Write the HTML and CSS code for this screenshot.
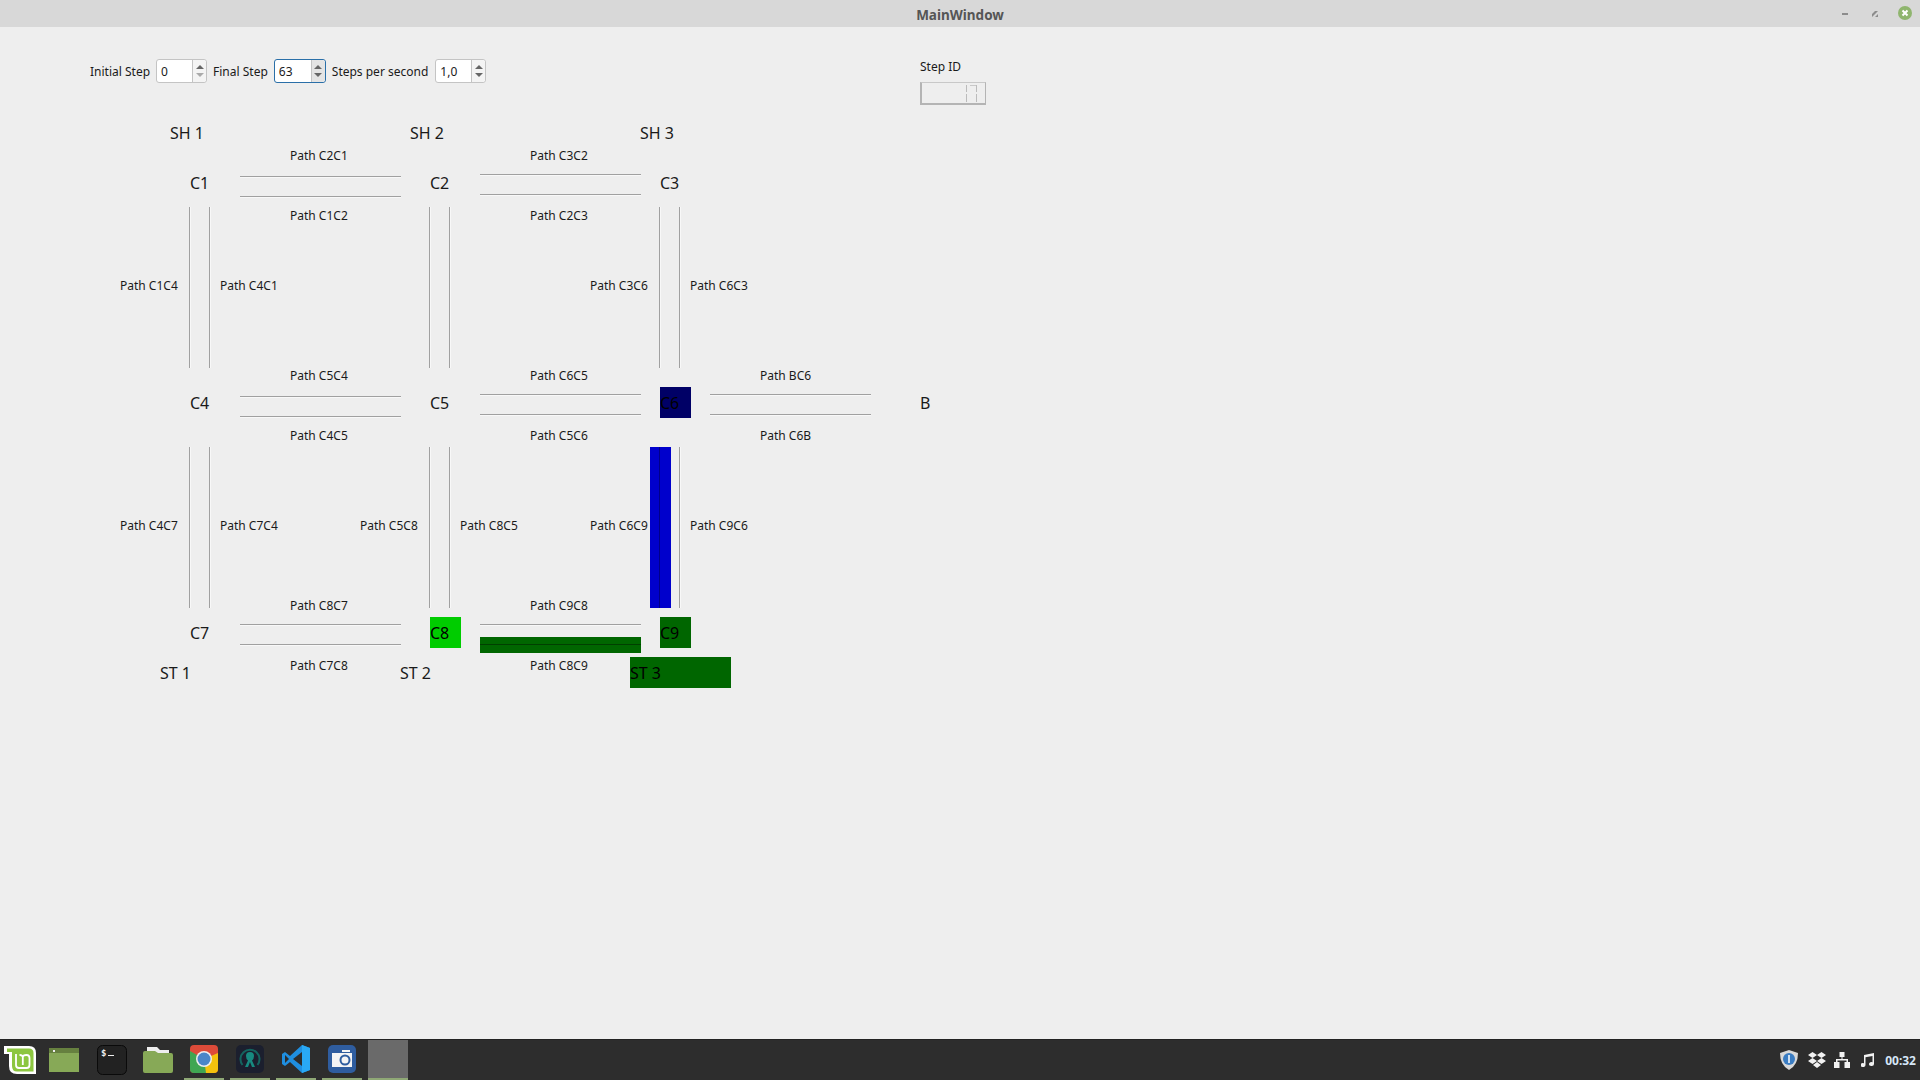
FILE: index.html
```html
<!DOCTYPE html>
<html lang="en">
<head>
  <meta charset="UTF-8">
  <title>MainWindow</title>
  <link rel="stylesheet" href="styles.css">
</head>
<body>
  <div class="screen">
    <header class="titlebar">
      <span class="titlebar-text">MainWindow</span>
      <div class="wm-buttons">
        <svg class="wm-btn" width="14" height="14" viewBox="0 0 14 14"><rect x="5" y="7" width="6" height="2" fill="#8c8c8c"/></svg>
        <svg class="wm-btn" width="14" height="14" viewBox="0 0 14 14"><path d="M1 4 L4 1 H7 L1 7Z M7 7 V4 L4 7Z" fill="#8c8c8c" transform="translate(4 4)"/></svg>
        <svg class="wm-btn" width="16" height="16" viewBox="0 0 16 16"><circle cx="8" cy="8" r="7" fill="#8fb56e"/><path d="M5.500 5.500 L10.500 10.500 M10.500 5.500 L5.500 10.500" stroke="#fff" stroke-width="2"/></svg>
      </div>
    </header>

    <main class="window">
      <div class="controls">
        <label>Initial Step</label>
        <div class="spin">
          <span class="spin-value">0</span>
          <span class="spin-arrows"><i class="up"></i><i class="down off"></i></span>
        </div>
        <label>Final Step</label>
        <div class="spin focused">
          <span class="spin-value">63</span>
          <span class="spin-arrows"><i class="up"></i><i class="down"></i></span>
        </div>
        <label class="label-sps">Steps per second</label>
        <div class="spin">
          <span class="spin-value">1,0</span>
          <span class="spin-arrows"><i class="up"></i><i class="down"></i></span>
        </div>
      </div>

      <div class="step-id">
        <label>Step ID</label>
        <div class="step-box"><span class="step-inner"></span></div>
      </div>

      <!-- diagram -->
      <span class="big n-sh1">SH 1</span>
      <span class="big n-sh2">SH 2</span>
      <span class="big n-sh3">SH 3</span>
      <span class="big n-c1">C1</span>
      <span class="big n-c2">C2</span>
      <span class="big n-c3">C3</span>
      <span class="big n-c4">C4</span>
      <span class="big n-c5">C5</span>
      <span class="big n-c6 cell navy">C6</span>
      <span class="big n-b">B</span>
      <span class="big n-c7">C7</span>
      <span class="big n-c8 cell lime">C8</span>
      <span class="big n-c9 cell green">C9</span>
      <span class="big n-st1">ST 1</span>
      <span class="big n-st2">ST 2</span>
      <span class="big n-st3 green">ST 3</span>

      <span class="path p1 r1">Path C2C1</span>
      <span class="path p1 r2">Path C1C2</span>
      <span class="path p2 r1">Path C3C2</span>
      <span class="path p2 r2">Path C2C3</span>
      <span class="path v1 r3">Path C1C4</span>
      <span class="path v2 r3">Path C4C1</span>
      <span class="path v5 r3">Path C3C6</span>
      <span class="path v6 r3">Path C6C3</span>
      <span class="path p1 r4">Path C5C4</span>
      <span class="path p1 r5">Path C4C5</span>
      <span class="path p2 r4">Path C6C5</span>
      <span class="path p2 r5">Path C5C6</span>
      <span class="path p3 r4">Path BC6</span>
      <span class="path p3 r5">Path C6B</span>
      <span class="path v1 r6">Path C4C7</span>
      <span class="path v2 r6">Path C7C4</span>
      <span class="path v3 r6">Path C5C8</span>
      <span class="path v4 r6">Path C8C5</span>
      <span class="path v5 r6">Path C6C9</span>
      <span class="path v6 r6">Path C9C6</span>
      <span class="path p1 r7">Path C8C7</span>
      <span class="path p1 r8">Path C7C8</span>
      <span class="path p2 r7">Path C9C8</span>
      <span class="path p2 r8">Path C8C9</span>

      <div class="hl h-c2c1"></div>
      <div class="hl h-c1c2"></div>
      <div class="hl h-c3c2"></div>
      <div class="hl h-c2c3"></div>
      <div class="hl h-c5c4"></div>
      <div class="hl h-c4c5"></div>
      <div class="hl h-c6c5"></div>
      <div class="hl h-c5c6"></div>
      <div class="hl h-bc6"></div>
      <div class="hl h-c6b"></div>
      <div class="hl h-c8c7"></div>
      <div class="hl h-c7c8"></div>
      <div class="hl h-c9c8"></div>

      <div class="vl t1 x1"></div>
      <div class="vl t1 x2"></div>
      <div class="vl t1 x3"></div>
      <div class="vl t1 x4"></div>
      <div class="vl t1 x5"></div>
      <div class="vl t1 x6"></div>
      <div class="vl t2 x1"></div>
      <div class="vl t2 x2"></div>
      <div class="vl t2 x3"></div>
      <div class="vl t2 x4"></div>
      <div class="vl t2 x6"></div>

      <div class="bar-blue"></div>
      <div class="bar-green"></div>
    </main>

    <footer class="taskbar">
      <div class="launchers">
        <div class="slot">
          <svg width="32" height="30" viewBox="0 0 32 30"><path d="M0 1 H25 Q32 1 32 8 V29 H13 Q5 29 5 21 V9 H0Z" fill="#fff"/><path d="M3 3.500 H25 Q29.500 3.500 29.500 8 V26.500 H13 Q8 26.500 8 21 V7 H3Z" fill="#8cc63f"/><path d="M12 9 V20 Q12 23 15 23 H22.500 Q25.500 23 25.500 20 V13 Q25.500 10 22.500 10 Q19 10 18.800 12 Q18.500 10 15.500 10 M18.800 12 V20" fill="none" stroke="#fff" stroke-width="1.800"/></svg>
        </div>
        <div class="slot launcher-shift">
          <svg width="30" height="24" viewBox="0 0 30 24"><rect width="30" height="24" fill="#87a957"/><rect width="30" height="5" fill="#66803f"/><rect x="4" y="2" width="2" height="2" fill="#eee"/></svg>
        </div>
        <div class="slot">
          <svg width="30" height="30" viewBox="0 0 30 30"><rect x=".5" y=".5" width="29" height="29" rx="5" fill="#222" stroke="#0a0a0a"/><text x="4" y="11" class="term-text">$</text><rect x="11" y="10" width="6" height="1" fill="#eee"/></svg>
        </div>
        <div class="slot">
          <svg width="30" height="26" viewBox="0 0 30 26"><path d="M4 0 H14 L17 3 H26 V6 H4Z" fill="#eee"/><path d="M2 4 H12 L15 6 H28 Q30 6 30 8 V24 Q30 26 28 26 H2 Q0 26 0 24 V6 Q0 4 2 4Z" fill="#87a957"/></svg>
        </div>
        <div class="slot">
          <svg width="28" height="28" viewBox="0 0 28 28">
            <rect width="28" height="28" rx="4" fill="#dd4b39"/>
            <path d="M14 14 L28 8 V24 Q28 28 24 28 H14Z" fill="#f4c20d"/>
            <path d="M0 6 V24 Q0 28 4 28 H16 L14 14Z" fill="#3fa652"/>
            <circle cx="14" cy="14" r="8" fill="#eee"/><circle cx="14" cy="14" r="6.500" fill="#4a86c8"/>
          </svg>
        </div>
        <div class="slot">
          <svg width="28" height="28" viewBox="0 0 28 28">
            <rect width="28" height="28" rx="5" fill="#1b1f2e"/>
            <path d="M6.500 20 A9.500 9.500 0 1 1 21.500 20" fill="none" stroke="#14645f" stroke-width="2"/>
            <path d="M14 7 Q18 7 18 11 Q18 14 16 15.500 L19 22 H16 L14 17 L12 22 H9 L12 15.500 Q10 14 10 11 Q10 7 14 7Z" fill="#178a80"/>
          </svg>
        </div>
        <div class="slot">
          <svg width="28" height="28" viewBox="0 0 28 28">
            <path d="M20 0 L28 3 V25 L20 28 L8 17 L3 21 L0 19 V9 L3 7 L8 11Z" fill="#1f8fe0"/>
            <path d="M20 0 V28 L28 25 V3Z" fill="#29a9f5"/>
            <path d="M20 7 L11 14 L20 21Z" fill="#2d2d2d"/>
            <path d="M3 10 L7 14 L3 18Z" fill="#2d2d2d"/>
          </svg>
        </div>
        <div class="slot">
          <svg width="28" height="28" viewBox="0 0 28 28">
            <rect width="28" height="28" rx="5" fill="#2f5d9f"/>
            <rect x="4" y="8" width="20" height="14" fill="#f4f4f4"/>
            <rect x="14" y="5" width="8" height="2" fill="#f4f4f4"/>
            <circle cx="17" cy="15" r="4.500" fill="#f4f4f4" stroke="#2f5d9f" stroke-width="2"/>
          </svg>
        </div>
        <div class="slot active"></div>
      </div>
      <div class="tray">
        <svg width="18" height="20" viewBox="0 0 18 20"><path d="M9 0 L18 3 Q18 15 9 20 Q0 15 0 3Z" fill="#d8d8d8"/><circle cx="9" cy="9" r="6" fill="#3a7cc2"/><rect x="8" y="5" width="2" height="8" fill="#cfe0f2"/></svg>
        <svg width="18" height="16" viewBox="0 0 18 16"><path d="M4.500 0 L9 3 L4.500 6 L0 3Z M13.500 0 L18 3 L13.500 6 L9 3Z M4.500 6 L9 9 L4.500 12 L0 9Z M13.500 6 L18 9 L13.500 12 L9 9Z M9 10 L13 13 L9 16 L5 13Z" fill="#f2f2f2"/></svg>
        <svg width="16" height="16" viewBox="0 0 16 16"><path d="M5.500 0 H10.500 V5 H8.500 V7 H14 V10 H16 V16 H10.500 V10 H12.500 V8.500 H3.500 V10 H5.500 V16 H0 V10 H2 V7 H7.500 V5 H5.500Z" fill="#f2f2f2"/></svg>
        <svg width="14" height="14" viewBox="0 0 14 14"><path d="M3 2 L13 0 V11 A2.500 2 0 1 1 11.500 9.200 V3 L4.500 4.300 V12 A2.500 2 0 1 1 3 10.200Z" fill="#f2f2f2"/></svg>
        <span class="clock">00:32</span>
      </div>
    </footer>
  </div>
</body>
</html>
```

FILE: styles.css
```css
* {
  box-sizing: border-box;
  margin: 0;
}

body {
  font-family: "Noto Sans", sans-serif;
  font-size: 12px;
  color: #1a1a1a;
  background-color: #eee;
}

.screen {
  display: flex;
  flex-direction: column;
  height: 1080px;
  width: 1920px;
  overflow: hidden;
}

/* title bar */
.titlebar {
  display: flex;
  justify-content: center;
  align-items: center;
  position: relative;
  height: 27px;
  padding-top: 2px;
  background-color: #d8d8d8;
}

.titlebar-text {
  font-size: 13.5px;
  font-weight: bold;
  color: #555;
}

.wm-buttons {
  position: absolute;
  right: 7px;
  top: 5px;
  display: flex;
  align-items: center;
  gap: 16px;
}

/* main window */
.window {
  flex-grow: 1;
  position: relative;
  background-color: #eee;
}

.controls {
  display: flex;
  align-items: center;
  position: absolute;
  left: 90px;
  top: 32px;
  height: 24px;
  gap: 6px;
}

.controls label {
  padding-top: 1px;
}

.controls .label-sps {
  margin-right: 1px;
}

.spin {
  display: flex;
  width: 51px;
  height: 24px;
  background-color: #fff;
  border: 1px solid #c4c4c4;
  border-radius: 3px;
}

.spin.focused {
  border-color: #2a6fa8;
  width: 52px;
}

.spin-value {
  flex-grow: 1;
  padding-left: 4px;
  line-height: 24px;
}

.spin-arrows {
  display: flex;
  flex-direction: column;
  justify-content: center;
  align-items: center;
  gap: 4px;
  width: 14px;
  background-color: #f4f4f4;
  border-left: 1px solid #c4c4c4;
  border-radius: 0 3px 3px 0;
}

.spin.focused .spin-arrows {
  background-color: #e4e4e4;
  width: 14px;
}

.spin-arrows i {
  width: 0;
  height: 0;
  border-left: 4px solid transparent;
  border-right: 4px solid transparent;
}

.spin-arrows .up {
  border-bottom: 4px solid #666;
}

.spin-arrows .down {
  border-top: 4px solid #666;
}

.spin-arrows .off {
  border-top-color: #aaa;
}

.step-id {
  position: absolute;
  left: 920px;
  top: 31px;
  display: flex;
  flex-direction: column;
  gap: 7px;
}

.step-box {
  position: relative;
  width: 66px;
  height: 23px;
  border: 1px solid #b4b4b4;
  border-left-width: 2px;
  border-top-color: #c8c8c8;
  border-bottom-width: 2px;
}

.step-inner {
  position: absolute;
  left: 44px;
  top: 2px;
  width: 11px;
  height: 17px;
  background:
    linear-gradient(#bbb 7px, transparent 7px, transparent 9px, #bbb 9px) left / 1px 100% no-repeat,
    linear-gradient(#bbb 7px, transparent 7px, transparent 9px, #bbb 9px) right / 1px 100% no-repeat,
    linear-gradient(#c8c8c8, #c8c8c8) right top / 7px 1px no-repeat;
}

/* diagram text */
.big,
.path {
  position: absolute;
  white-space: nowrap;
}

.big {
  font-size: 16px;
  height: 31px;
  line-height: 33px;
}

.path {
  height: 18px;
  line-height: 20px;
}

.cell {
  width: 31px;
}

.navy { background-color: #000066; color: #000; }
.lime { background-color: #00cc00; color: #000; }
.green { background-color: #006600; color: #000; }

.n-sh1 { left: 170px; top: 90px; }
.n-sh2 { left: 410px; top: 90px; }
.n-sh3 { left: 640px; top: 90px; }
.n-c1 { left: 190px; top: 140px; }
.n-c2 { left: 430px; top: 140px; }
.n-c3 { left: 660px; top: 140px; }
.n-c4 { left: 190px; top: 360px; }
.n-c5 { left: 430px; top: 360px; }
.n-c6 { left: 660px; top: 360px; }
.n-b { left: 920px; top: 360px; }
.n-c7 { left: 190px; top: 590px; }
.n-c8 { left: 430px; top: 590px; }
.n-c9 { left: 660px; top: 590px; }
.n-st1 { left: 160px; top: 630px; }
.n-st2 { left: 400px; top: 630px; }
.n-st3 { left: 630px; top: 630px; width: 101px; }

/* path label columns and rows */
.p1 { left: 290px; }
.p2 { left: 530px; }
.p3 { left: 760px; }
.v1 { left: 120px; }
.v2 { left: 220px; }
.v3 { left: 360px; }
.v4 { left: 460px; }
.v5 { left: 590px; }
.v6 { left: 690px; }
.r1 { top: 119px; }
.r2 { top: 179px; }
.r3 { top: 249px; }
.r4 { top: 339px; }
.r5 { top: 399px; }
.r6 { top: 489px; }
.r7 { top: 569px; }
.r8 { top: 629px; }

/* lines */
.hl {
  position: absolute;
  width: 161px;
  height: 2px;
  border-top: 1px solid #a0a0a0;
  border-bottom: 1px solid #f8f8f8;
}

.h-c2c1 { left: 240px; top: 149px; }
.h-c1c2 { left: 240px; top: 169px; }
.h-c3c2 { left: 480px; top: 147px; }
.h-c2c3 { left: 480px; top: 167px; }
.h-c5c4 { left: 240px; top: 369px; }
.h-c4c5 { left: 240px; top: 389px; }
.h-c6c5 { left: 480px; top: 367px; }
.h-c5c6 { left: 480px; top: 387px; }
.h-bc6 { left: 710px; top: 367px; }
.h-c6b { left: 710px; top: 387px; }
.h-c8c7 { left: 240px; top: 597px; }
.h-c7c8 { left: 240px; top: 617px; }
.h-c9c8 { left: 480px; top: 597px; }

.vl {
  position: absolute;
  width: 2px;
  height: 161px;
  border-left: 1px solid #a0a0a0;
  border-right: 1px solid #f8f8f8;
}

.t1 { top: 180px; }
.t2 { top: 420px; }
.x1 { left: 189px; }
.x2 { left: 209px; }
.x3 { left: 429px; }
.x4 { left: 449px; }
.x5 { left: 659px; }
.x6 { left: 679px; }

.bar-blue {
  position: absolute;
  left: 650px;
  top: 420px;
  width: 21px;
  height: 161px;
  background: linear-gradient(90deg, #0000cc 9px, #000088 9px, #000088 10px, #0000cc 10px);
}

.bar-green {
  position: absolute;
  left: 480px;
  top: 610px;
  width: 161px;
  height: 16px;
  background: linear-gradient(180deg, #006600 7px, #003f00 7px, #003f00 8px, #006600 8px);
}

/* taskbar */
.taskbar {
  display: flex;
  justify-content: space-between;
  height: 41px;
  background-color: #2d2d2d;
  border-top: 1px solid #222;
}

.launchers {
  display: flex;
  gap: 6px;
}

.slot {
  display: flex;
  justify-content: center;
  align-items: center;
  width: 40px;
  height: 40px;
}

.launcher-shift svg {
  margin-right: 4px;
}

.slot:nth-child(n+5) {
  border-bottom: 2px solid #8fa876;
}

.slot.active {
  background-color: #6a6a6a;
}

.term-text {
  font-family: "DejaVu Sans Mono", monospace;
  font-size: 9px;
  font-weight: bold;
  fill: #eee;
}

.tray {
  display: flex;
  align-items: center;
  gap: 9px;
  padding-right: 4px;
}

.tray svg:nth-child(2) {
  margin-left: 1px;
}

.tray svg:nth-child(3) {
  margin-right: 2px;
  margin-left: -1px;
}

.clock {
  margin-left: 1px;
  font-weight: bold;
  font-size: 12px;
  color: #d6e6f7;
}
```
